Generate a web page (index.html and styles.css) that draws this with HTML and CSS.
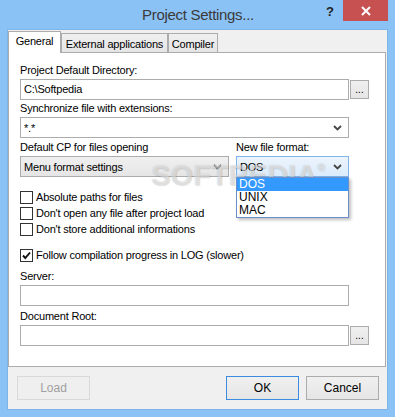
FILE: index.html
```html
<!DOCTYPE html>
<html>
<head>
<meta charset="utf-8">
<link rel="stylesheet" href="styles.css">
</head>
<body>
<div class="window">
  <div class="titlebar">
    <div class="title">Project Settings...</div>
    <div class="help">?</div>
    <div class="close">
      <svg width="10" height="10" viewBox="0 0 10 10"><path d="M1 1L9 9M9 1L1 9" stroke="#fff" stroke-width="2"/></svg>
    </div>
  </div>
  <div class="client">
    <div class="tabs">
      <div class="tab tab-active tab-general">General</div>
      <div class="tab tab-external">External applications</div>
      <div class="tab tab-compiler">Compiler</div>
    </div>
    <div class="panel">
      <div class="label">Project Default Directory:</div>
      <div class="row">
        <div class="input input-wide">C:\Softpedia</div>
        <div class="ellipsis">...</div>
      </div>
      <div class="label">Synchronize file with extensions:</div>
      <div class="select select-wide">
        <span>*.*</span>
        <svg class="chev" width="9" height="6" viewBox="0 0 9 6"><path d="M1 1L4.5 4.5L8 1" fill="none" stroke="#444" stroke-width="1.8"/></svg>
      </div>
      <div class="row two-col">
        <div class="col col-cp">
          <div class="label">Default CP for files opening</div>
          <div class="select select-gray">
            <span>Menu format settings</span>
            <svg class="chev" width="9" height="6" viewBox="0 0 9 6"><path d="M1 1L4.5 4.5L8 1" fill="none" stroke="#444" stroke-width="1.8"/></svg>
          </div>
        </div>
        <div class="col col-format">
          <div class="label">New file format:</div>
          <div class="select select-focus">
            <span>DOS</span>
            <svg class="chev" width="9" height="6" viewBox="0 0 9 6"><path d="M1 1L4.5 4.5L8 1" fill="none" stroke="#444" stroke-width="1.8"/></svg>
            <div class="dropdown">
              <div class="opt opt-sel">DOS</div>
              <div class="opt">UNIX</div>
              <div class="opt">MAC</div>
            </div>
          </div>
        </div>
      </div>
      <div class="checks">
        <div class="check"><span class="box"></span><span>Absolute paths for files</span></div>
        <div class="check"><span class="box"></span><span>Don't open any file after project load</span></div>
        <div class="check"><span class="box"></span><span>Don't store additional informations</span></div>
      </div>
      <div class="check check-follow"><span class="box"><svg width="11" height="11" viewBox="0 0 11 11"><path d="M2 5.5L4.3 8L9 2.5" fill="none" stroke="#111" stroke-width="1.9"/></svg></span><span>Follow compilation progress in LOG (slower)</span></div>
      <div class="label label-server">Server:</div>
      <div class="row">
        <div class="input input-wide"></div>
      </div>
      <div class="label label-root">Document Root:</div>
      <div class="row">
        <div class="input input-wide"></div>
        <div class="ellipsis">...</div>
      </div>
      <div class="watermark">SOFTPEDIA<sup>®</sup></div>
    </div>
    <div class="buttons">
      <div class="btn btn-disabled">Load</div>
      <div class="spacer"></div>
      <div class="btn btn-default">OK</div>
      <div class="btn">Cancel</div>
    </div>
  </div>
</div>
</body>
</html>
```

FILE: styles.css
```css
* { box-sizing: border-box; }
html, body {
  margin: 0;
  padding: 0;
}
body {
  width: 395px;
  height: 417px;
  overflow: hidden;
  font-family: "Liberation Sans", Arial, sans-serif;
  font-size: 11px;
  letter-spacing: -0.2px;
  color: #000;
}
.window {
  width: 395px;
  height: 417px;
  background: #8bc2f5;
  display: flex;
  flex-direction: column;
}
.titlebar {
  position: relative;
  height: 29px;
  flex: none;
}
.title {
  text-align: center;
  font-size: 15px;
  letter-spacing: -0.3px;
  line-height: 30px;
  color: #3a3a3a;
  padding-left: 1px;
}
.help {
  position: absolute;
  left: 326px;
  top: 4px;
  font-size: 13px;
  font-weight: bold;
  color: #222;
  line-height: 16px;
}
.close {
  position: absolute;
  left: 343px;
  top: 0;
  width: 45px;
  height: 21px;
  background: #c75050;
  display: flex;
  align-items: center;
  justify-content: center;
}
.client {
  flex: 1;
  margin: 0 7px 7px 7px;
  border: 1px solid #7fb4e8;
  background: #f0f0f0;
  display: flex;
  flex-direction: column;
}
.tabs {
  display: flex;
  align-items: flex-end;
  height: 22px;
  margin-right: 1px;
  position: relative;
  z-index: 2;
}
.tab {
  height: 19px;
  border: 1px solid #acacac;
  border-bottom: none;
  background: linear-gradient(#f0f0f0, #e5e5e5);
  display: flex;
  align-items: center;
  justify-content: center;
  padding-top: 1px;
}
.tab-active {
  height: 22px;
  margin-bottom: -1px;
  background: #fff;
  padding-top: 0;
  padding-bottom: 3px;
}
.tab-general { width: 53px; }
.tab-external { width: 107px; }
.tab-compiler { width: 50px; }
.panel {
  position: relative;
  margin-right: 1px;
  height: 315px;
  border: 1px solid #acacac;
  background: #fff;
  padding: 9px 0 0 11px;
  flex: none;
}
.label {
  height: 16px;
  line-height: 16px;
  margin-bottom: 1px;
  white-space: nowrap;
}
.row {
  display: flex;
  align-items: center;
  gap: 1px;
}
.input {
  height: 21px;
  border: 1px solid #acacac;
  background: #fff;
  line-height: 19px;
  padding-left: 3px;
}
.input-wide { width: 329px; }
.ellipsis {
  width: 19px;
  height: 19px;
  border: 1px solid #acacac;
  background: linear-gradient(#f0f0f0, #e5e5e5);
  text-align: center;
  line-height: 17px;
  font-size: 10px;
  letter-spacing: 0;
}
.select {
  position: relative;
  height: 21px;
  border: 1px solid #acacac;
  background: #fff;
  display: flex;
  align-items: center;
  justify-content: space-between;
  padding: 0 6px 0 3px;
}
.select-wide { width: 329px; margin-bottom: 1px; }
.select-gray { background: linear-gradient(#f0f0f0, #e5e5e5); width: 209px; }
.select-focus {
  width: 113px;
  border-color: #7eb4ea;
  background: linear-gradient(#ecf4fc, #dcecfc);
}
.chev { flex: none; }
.two-col {
  align-items: flex-start;
  gap: 7px;
}
.dropdown {
  position: absolute;
  left: -1px;
  top: 20px;
  width: 113px;
  height: 41px;
  border: 1px solid #6b8fca;
  background: #fff;
  box-shadow: 2px 2px 3px rgba(0, 0, 0, 0.25);
  padding: 0;
  z-index: 8;
  font-size: 12px;
  letter-spacing: 0;
}
.opt {
  height: 13px;
  line-height: 13px;
  padding-left: 2px;
}
.opt-sel {
  background: #3399ff;
  color: #fff;
}
.checks {
  margin-top: 12px;
}
.check {
  height: 16px;
  display: flex;
  align-items: center;
  gap: 3px;
  white-space: nowrap;
}
.box {
  width: 13px;
  height: 13px;
  border: 1px solid #333;
  background: #fff;
  display: flex;
  align-items: center;
  justify-content: center;
  flex: none;
}
.check-follow { margin-top: 10px; }
.label-server { margin-top: 5px; }
.label-root { margin-top: 2px; }
.watermark {
  position: absolute;
  left: 142px;
  top: 99px;
  font-size: 29px;
  font-weight: bold;
  letter-spacing: 0;
  line-height: 30px;
  color: rgba(255, 255, 255, 0.55);
  text-shadow: 0 0 1px rgba(0, 0, 0, 0.2), 1px 1px 1px rgba(0, 0, 0, 0.1);
  pointer-events: none;
  z-index: 6;
}
.watermark sup {
  font-size: 11px;
  vertical-align: 14px;
}
.buttons {
  display: flex;
  align-items: center;
  padding: 9px 8px 0 9px;
  gap: 7px;
}
.spacer { flex: 1; }
.btn {
  width: 73px;
  height: 24px;
  border: 1px solid #acacac;
  background: linear-gradient(#f0f0f0, #e5e5e5);
  text-align: center;
  line-height: 22px;
  font-size: 12px;
  letter-spacing: 0;
}
.btn-default {
  border-color: #3c8be0;
}
.btn-disabled {
  border-color: #d9d9d9;
  background: #efefef;
  color: #a0a0a0;
}
```
